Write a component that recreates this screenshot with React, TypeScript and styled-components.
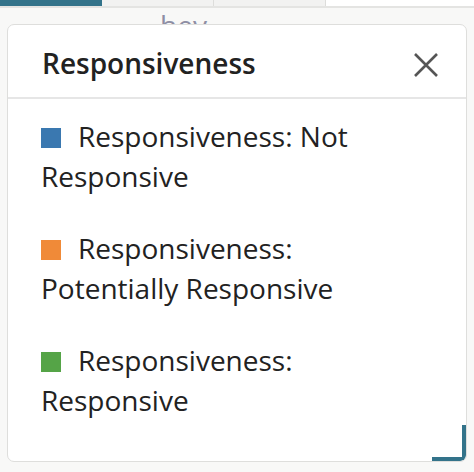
import React from "react";
import styled, { createGlobalStyle } from "styled-components";

const Global = createGlobalStyle`
  html, body {
    margin: 0;
    padding: 0;
    background: #f8f8f7;
    font-family: "Open Sans", "Noto Sans", sans-serif;
  }
`;

const Page = styled.div`
  position: relative;
  width: 474px;
  height: 472px;
  overflow: hidden;
  background: #f8f8f7;
`;

const TabStrip = styled.div`
  display: flex;
  height: 6px;
  border-bottom: 2px solid #e4e4e2;
`;

const Tab = styled.div<{ $w: number; $active?: boolean; $open?: boolean }>`
  width: ${(p) => p.$w}px;
  flex: ${(p) => (p.$open ? "1" : "none")};
  background: ${(p) => (p.$active ? "#33738a" : p.$open ? "#ffffff" : "#f2f2f1")};
  border-right: ${(p) => (p.$active || p.$open ? "none" : "1px solid #dddddb")};
`;

const Behind = styled.div`
  padding: 2px 0 0 160px;
  font-size: 28px;
  line-height: 30px;
  color: #8e8ea4;
`;

const Popup = styled.div`
  position: absolute;
  top: 24px;
  left: 7px;
  width: 458px;
  height: 436px;
  background: #fff;
  border: 1px solid #dededc;
  border-radius: 7px;
  overflow: hidden;
`;

const Header = styled.div`
  display: flex;
  align-items: center;
  justify-content: space-between;
  height: 74px;
  padding: 4px 27px 0 34px;
  box-sizing: border-box;
  border-bottom: 2px solid #e6e6e6;
`;

const Title = styled.h2`
  margin: 0;
  font-size: 28px;
  font-weight: 600;
  color: #222;
`;

const Close = styled.button`
  display: flex;
  margin-top: 4px;
  padding: 0;
  border: none;
  background: none;
  cursor: pointer;
`;

const Body = styled.div`
  display: flex;
  flex-direction: column;
  gap: 32px;
  padding: 17px 40px 0 33px;
`;

const Item = styled.div`
  font-size: 28px;
  line-height: 40px;
  color: #222;
`;

const Swatch = styled.span<{ $c: string }>`
  display: inline-block;
  width: 20px;
  height: 20px;
  margin-right: 17px;
  vertical-align: -1px;
  background: ${(p) => p.$c};
`;

const Corner = styled.div`
  position: absolute;
  right: 0;
  bottom: 0;
  width: 30px;
  height: 32px;
  border-right: 4px solid #33738a;
  border-bottom: 4px solid #33738a;
  border-bottom-right-radius: 5px;
`;

const items = [
  { c: "#3a78b0", t: "Responsiveness: Not Responsive" },
  { c: "#f08a38", t: "Responsiveness: Potentially Responsive" },
  { c: "#55a447", t: "Responsiveness: Responsive" },
];

export default function App() {
  return (
    <Page>
      <Global />
      <TabStrip>
        <Tab $w={102} $active />
        <Tab $w={111} />
        <Tab $w={111} />
        <Tab $w={0} $open />
      </TabStrip>
      <Behind>hey</Behind>
      <Popup>
        <Header>
          <Title>Responsiveness</Title>
          <Close aria-label="Close">
            <svg width="26" height="26" viewBox="0 0 26 26">
              <path d="M2 2 L24 24 M24 2 L2 24" stroke="#555" strokeWidth="2.6" />
            </svg>
          </Close>
        </Header>
        <Body>
          {items.map((it) => (
            <Item key={it.t}>
              <Swatch $c={it.c} />
              {it.t}
            </Item>
          ))}
        </Body>
        <Corner />
      </Popup>
    </Page>
  );
}
